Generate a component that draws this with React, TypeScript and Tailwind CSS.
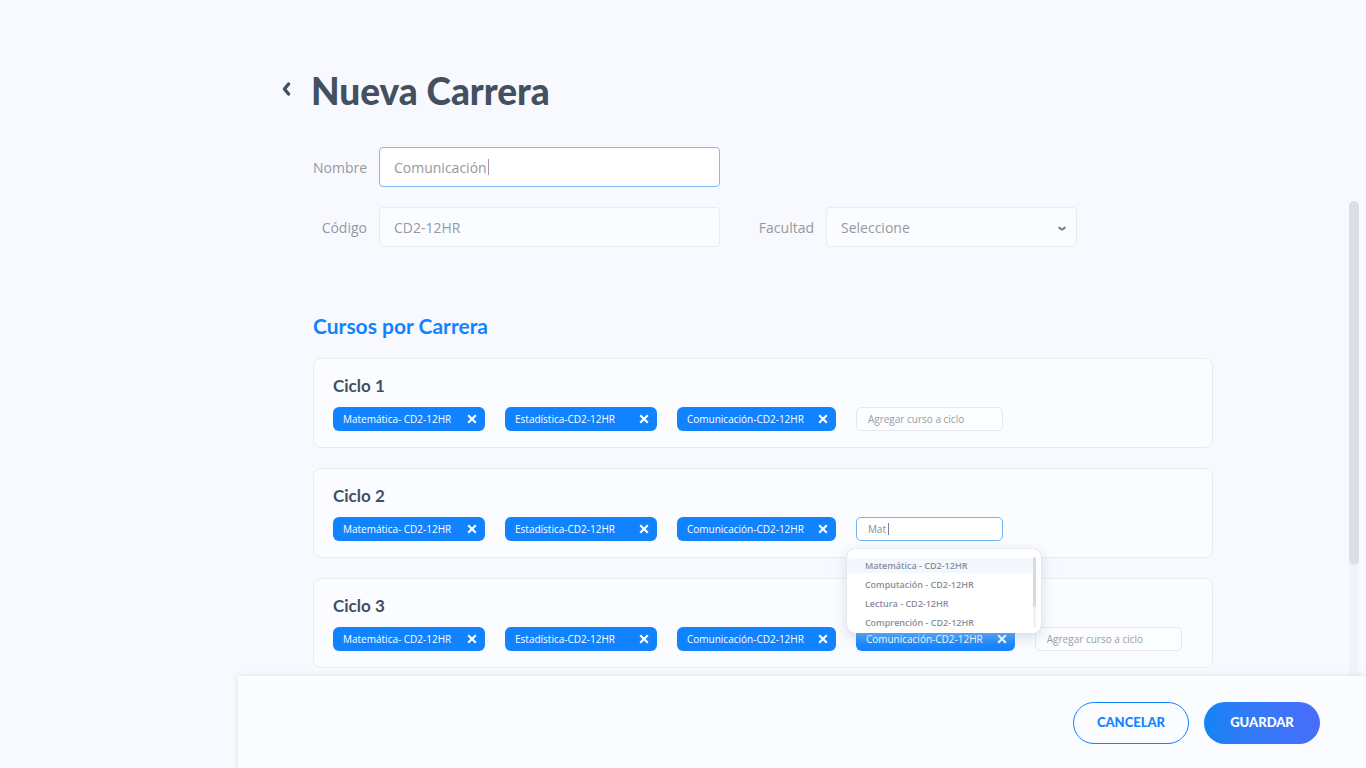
import { useState } from "react";

type Cycle = { id: number; courses: string[]; query?: string };

const initialCycles: Cycle[] = [
  { id: 1, courses: ["Matemática- CD2-12HR", "Estadística-CD2-12HR", "Comunicación-CD2-12HR"] },
  { id: 2, courses: ["Matemática- CD2-12HR", "Estadística-CD2-12HR", "Comunicación-CD2-12HR"], query: "Mat" },
  {
    id: 3,
    courses: [
      "Matemática- CD2-12HR",
      "Estadística-CD2-12HR",
      "Comunicación-CD2-12HR",
      "Comunicación-CD2-12HR",
    ],
  },
];

const suggestions = [
  "Matemática - CD2-12HR",
  "Computación - CD2-12HR",
  "Lectura - CD2-12HR",
  "Comprención - CD2-12HR",
];

const fieldClass = "h-10 w-full rounded-[4px] border px-[14px] text-[14px] text-[#96989f] outline-none";
const labelClass = "text-right text-[14px] text-[#96989f]";

function CourseChip({ name, onRemove }: { name: string; onRemove: () => void }) {
  return (
    <li className="flex h-6 min-w-[152px] items-center justify-between gap-[14px] rounded-[6px] bg-[#1283ff] pr-2 pl-[10px] text-white">
      <span className="text-[10px] whitespace-nowrap">{name}</span>
      <button type="button" aria-label={`Quitar ${name}`} onClick={onRemove}>
        <svg viewBox="0 0 10 10" className="block h-[10px] w-[10px]" fill="none" stroke="currentColor" strokeWidth="2.1">
          <path d="M1.2 1.2 8.8 8.8M8.8 1.2 1.2 8.8" />
        </svg>
      </button>
    </li>
  );
}

function SuggestionMenu() {
  return (
    <div className="absolute top-8 -left-[9px] z-10 flex h-[84px] w-[194px] overflow-hidden rounded-[8px] bg-white shadow-[0_4px_14px_rgba(180,200,212,0.6),0_0_1px_rgba(120,130,150,0.5)]">
      <ul role="listbox" aria-label="Cursos sugeridos" className="flex flex-1 flex-col gap-1 pt-[9px]">
        {suggestions.map((item, i) => (
          <li
            key={item}
            role="option"
            aria-selected={i === 0}
            className={`pl-[18px] text-[9px] leading-[15px] font-semibold text-[#8b8d98] ${i === 0 ? "bg-[#f3f8ff]" : ""}`}
          >
            {item}
          </li>
        ))}
      </ul>
      <div aria-hidden="true" className="mt-2 mr-[5px] mb-[5px] w-[3px] rounded-full bg-[#f3f3f7]">
        <div className="h-[50px] rounded-full bg-[#d8dae3]" />
      </div>
    </div>
  );
}

function CycleCard({ cycle, onRemove }: { cycle: Cycle; onRemove: (index: number) => void }) {
  const active = cycle.query !== undefined;
  return (
    <section className="rounded-[8px] border border-[#e9ebf1] bg-[#fbfcff] px-[19px] pt-[15px] pb-4">
      <h3 className="font-['Lato',sans-serif] text-[17px] leading-6 font-bold text-[#42505f]">
        Ciclo {cycle.id}
      </h3>
      <div className="mt-[9px] flex flex-wrap gap-5">
        <ul className="contents">
          {cycle.courses.map((name, i) => (
            <CourseChip key={i} name={name} onRemove={() => onRemove(i)} />
          ))}
        </ul>
        <div className="relative w-[147px]">
          <input
            type="text"
            aria-label={`Agregar curso a ciclo ${cycle.id}`}
            placeholder="Agregar curso a ciclo"
            defaultValue={cycle.query}
            className={`block h-6 w-full rounded-[5px] border px-[11px] text-[10px] text-[#8b8d98] outline-none placeholder:text-[#9a9ca5] ${
              active ? "border-[#6fb2fb] bg-white" : "border-[#e6e8ee] bg-[#fcfdff]"
            }`}
          />
          {active && <span aria-hidden="true" className="absolute top-[6px] left-8 h-3 w-px bg-[#7d8089]" />}
          {active && <SuggestionMenu />}
        </div>
      </div>
    </section>
  );
}

export default function App() {
  const [cycles, setCycles] = useState(initialCycles);

  const removeCourse = (id: number, index: number) =>
    setCycles((prev) =>
      prev.map((c) => (c.id === id ? { ...c, courses: c.courses.filter((_, i) => i !== index) } : c)),
    );

  return (
    <div className="flex h-screen bg-[#f8f9fe] font-['Open_Sans',sans-serif]">
      <div className="w-[238px] shrink-0" />
      <form className="flex min-w-0 flex-1 flex-col" onSubmit={(e) => e.preventDefault()}>
        <div className="flex min-h-0 flex-1">
          <main className="min-w-0 flex-1 overflow-y-auto pl-11 [scrollbar-width:none]">
            <header className="flex items-center gap-5 pt-16">
              <button type="button" aria-label="Volver" className="text-[#42505f]">
                <svg viewBox="0 0 9 16" className="mb-1 block h-4 w-[9px]" fill="none" stroke="currentColor" strokeWidth="3.4">
                  <path d="M6.6 3 2.4 8l4.2 5" strokeLinecap="round" strokeLinejoin="round" />
                </svg>
              </button>
              <h1 className="font-['Lato',sans-serif] text-[37px] leading-[54px] font-black text-[#42505f]">
                Nueva Carrera
              </h1>
            </header>

            <div className="mt-[29px] mr-[120px] ml-[31px] max-w-[900px]">
              <div className="grid grid-cols-[54px_minmax(0,341px)_82px_minmax(0,251px)] items-center gap-x-3 gap-y-5">
                <label htmlFor="nombre" className={labelClass}>
                  Nombre
                </label>
                <div className="relative">
                  <input id="nombre" type="text" defaultValue="Comunicación" className={`${fieldClass} border-[#7fb9f7] bg-white`} />
                  <span aria-hidden="true" className="absolute top-3 left-[109px] h-4 w-px bg-[#9a9ca5]" />
                </div>
                <label htmlFor="codigo" className={`${labelClass} col-start-1`}>
                  Código
                </label>
                <input id="codigo" type="text" defaultValue="CD2-12HR" className={`${fieldClass} border-[#e9ebf1] bg-[#fbfcff]`} />
                <label htmlFor="facultad" className={labelClass}>
                  Facultad
                </label>
                <div className="relative">
                  <select id="facultad" className={`${fieldClass} appearance-none border-[#e9ebf1] bg-[#fbfcff]`}>
                    <option>Seleccione</option>
                  </select>
                  <svg
                    aria-hidden="true"
                    viewBox="0 0 8 6"
                    className="pointer-events-none absolute top-[19px] right-[11px] h-[6px] w-2 text-[#7d8089]"
                    fill="none"
                    stroke="currentColor"
                    strokeWidth="2"
                  >
                    <path d="M1.2 1.6 4 3.8l2.8-2.2" strokeLinecap="round" strokeLinejoin="round" />
                  </svg>
                </div>
              </div>

              <h2 className="mt-[65px] font-['Lato',sans-serif] text-[21px] leading-7 font-bold text-[#1283ff]">
                Cursos por Carrera
              </h2>
              <div className="mt-[18px] flex flex-col gap-5 pb-2">
                {cycles.map((cycle) => (
                  <CycleCard key={cycle.id} cycle={cycle} onRemove={(i) => removeCourse(cycle.id, i)} />
                ))}
              </div>
            </div>
          </main>
          <div aria-hidden="true" className="mt-[201px] mr-[7px] w-[10px] rounded-t-full bg-[#f3f4f9]">
            <div className="h-[364px] rounded-full bg-[#dbdfe5]" />
          </div>
        </div>

        <footer className="relative z-20 flex justify-end gap-[15px] bg-[#fbfcff] pt-[26px] pr-[46px] pb-6 shadow-[0_0_6px_rgba(60,70,90,0.14)]">
          <button
            type="button"
            className="h-[42px] w-[116px] rounded-full border border-[#1283ff] font-['Lato',sans-serif] text-[13px] font-black text-[#1283ff]"
          >
            CANCELAR
          </button>
          <button
            type="submit"
            className="h-[42px] w-[116px] rounded-full bg-linear-to-r from-[#1283f5] to-[#486cfb] font-['Lato',sans-serif] text-[13px] font-black text-white"
          >
            GUARDAR
          </button>
        </footer>
      </form>
    </div>
  );
}
